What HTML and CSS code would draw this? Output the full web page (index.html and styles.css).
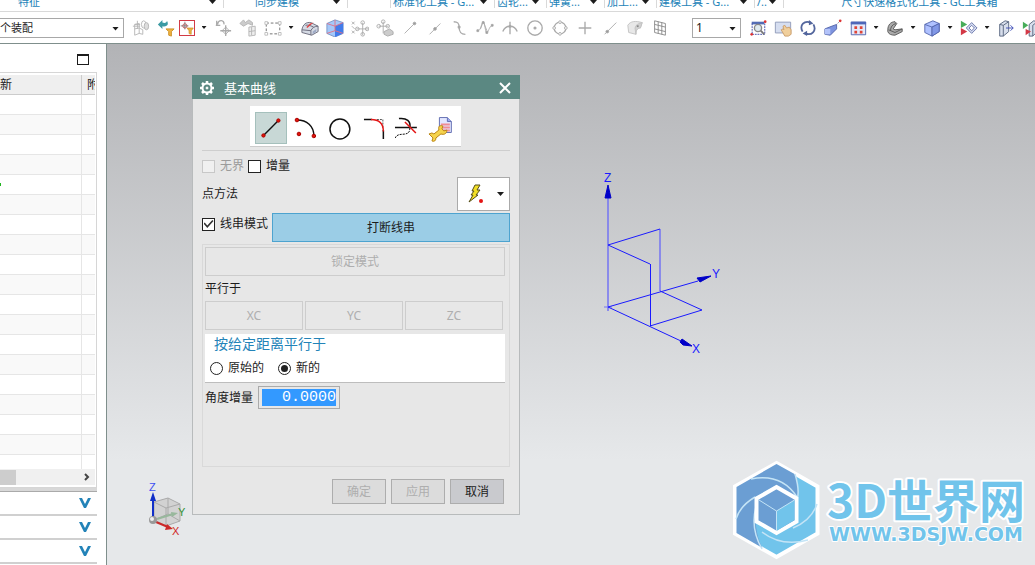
FILE: index.html
```html
<!DOCTYPE html>
<html lang="zh-CN">
<head>
<meta charset="utf-8">
<title>基本曲线</title>
<link rel="stylesheet" href="styles.css">
</head>
<body>
<div class="app">
  <nav class="groups">
    <div class="group g1"><span>特征</span><i class="caret"></i></div>
    <div class="group g2"><span>同步建模</span><i class="caret"></i></div>
    <div class="group gap"></div>
    <div class="group left g3"><span>标准化工具 - G...</span><i class="caret"></i></div>
    <div class="group left g4"><span>齿轮...</span><i class="caret"></i></div>
    <div class="group left g5"><span>弹簧...</span><i class="caret"></i></div>
    <div class="group left g6"><span>加工...</span><i class="caret"></i></div>
    <div class="group left g7"><span>建模工具 - G...</span><i class="caret"></i></div>
    <div class="group left g8"><span>/..</span><i class="caret"></i></div>
    <div class="group last"><span>尺寸快速格式化工具 - GC工具箱</span></div>
  </nav>

  <div class="toolbar">
    <div class="combo scope"><select aria-label="选择范围"><option>个装配</option></select></div>
    <button class="tool" aria-label="装配约束"><svg viewBox="0 0 20 20" fill="none" stroke="#b4b4b4"><path d="M3 6v12l5-2V5zM3 11l5-1M8 10l4 2v5l-4-1M1 8h8M6 2v9M3 6h6"/><ellipse cx="13" cy="6" rx="2.500" ry="4"/><ellipse cx="16" cy="8" rx="2.500" ry="4" fill="#ddd"/></svg></button>
    <button class="tool" aria-label="重置过滤器"><svg viewBox="0 0 20 20"><path d="M1 6l5-5v3c3 1 5 0 5-2 3 5-1 7-5 6v3z" fill="#3b9aa3"/><path d="M10 11h9l-3 3v5l-3-1v-4z" fill="#f0b440" stroke="#c98d25"/></svg></button>
    <button class="tool framed" aria-label="点过滤器"><svg viewBox="0 0 20 20"><path d="M7 1v11M1 7h11" stroke="#555"/><circle cx="7" cy="7" r="3" fill="none" stroke="#a33"/><path d="M10 10h9l-3 4v5l-3-1v-4z" fill="#f0b440" stroke="#c98d25"/></svg></button>
    <button class="drop" aria-label="更多过滤器"><i class="caret"></i></button>
    <button class="tool" aria-label="恢复点"><svg viewBox="0 0 20 20" fill="none" stroke="#aaa" stroke-width="1.500"><path d="M3 7V2M2 7h5M4 6c1-6 8-5 7 0M13 7v12M7 13h12"/><path d="M13 9l4 4-4 4-4-4z" stroke-width="1"/></svg></button>
    <button class="tool" aria-label="恢复选择"><svg viewBox="0 0 20 20" fill="#ccc" stroke="#b4b4b4"><path d="M1 5l4-4 2 3 4-3 4 3v3l-5-2-5 3z"/><path d="M11 9l7-1v10l-7 1zM11 14l7-1M14 9v9"  fill="#eee"/></svg></button>
    <button class="tool" aria-label="矩形选择"><svg viewBox="0 0 20 20" fill="none" stroke="#666"><path d="M2.500 4.500h15v12h-15z" stroke-dasharray="3 2"/><path d="M1 3h3v3H1zM16 15h3v3h-3zM16 3h3v3h-3zM1 15h3v3H1z" fill="#fff" stroke="#bbb"/></svg></button>
    <button class="drop" aria-label="选择方式"><i class="caret"></i></button>
    <button class="tool" aria-label="着色体"><svg viewBox="0 0 20 20"><path d="M1 12c1-6 5-9 10-8l8 4v6l-7 4-11-3z" fill="#d5dae4" stroke="#667"/><path d="M1 12l10 1c1-3 4-5 8-5M11 13v5M5 7c3-1 7 1 9 2" fill="none" stroke="#667"/><path d="M10 5l4-1-7 6-1-1z" fill="#d44"/><path d="M13 14l4-3v3l-4 3z" fill="#9da9c5"/></svg></button>
    <button class="tool" aria-label="静态线框"><svg viewBox="0 0 20 20"><path d="M1 5l9-4 9 3v12l-9 4-9-4z" fill="#a4c8fa" stroke="#7794c5"/><path d="M10 8v12l9-4V4z" fill="#427bea"/><path d="M1 5l9 3 9-4M10 1v12l-9 3M10 13l9 3" fill="none" stroke="#e16f83"/></svg></button>
    <button class="tool" aria-label="捕捉点"><svg viewBox="0 0 20 20" fill="none" stroke="#aaa"><path d="M1 3l3 3M1 8l3 3M1 13l3 3M4 3L1 6M4 13l-3 3M13 4v14M6 11h14"/><circle cx="13" cy="4" r="2"/><circle cx="13" cy="17" r="2"/><circle cx="7" cy="11" r="2"/><circle cx="18" cy="11" r="2"/></svg></button>
    <button class="tool" aria-label="清除捕捉"><svg viewBox="0 0 20 20" fill="none" stroke="#aaa"><circle cx="8" cy="3" r="2"/><circle cx="3" cy="8" r="2"/><circle cx="13" cy="8" r="2"/><path d="M8 3v13M3 8h11"/><path d="M9 14l6-3 4 3v3l-6 2-4-2z" fill="#ccc"/></svg></button>
    <button class="tool" aria-label="端点"><svg viewBox="0 0 20 20" stroke="#aaa" fill="#999"><path d="M4 16L15 5"/><circle cx="15" cy="5" r="1.500"/></svg></button>
    <button class="tool" aria-label="中点"><svg viewBox="0 0 20 20" stroke="#aaa" fill="#999"><path d="M4 17L16 5"/><circle cx="10" cy="11" r="1.500"/></svg></button>
    <button class="tool" aria-label="控制点"><svg viewBox="0 0 20 20" fill="none" stroke="#aaa" stroke-width="1.500"><path d="M3 3c5 0 6 2 6 6 0 6 2 8 7 8"/><circle cx="9" cy="9" r="1" fill="#999"/></svg></button>
    <button class="tool" aria-label="极点"><svg viewBox="0 0 20 20" fill="none" stroke="#aaa"><path d="M2 13C6 13 6 3 8 3s2 12 4 12 2-6 6-8M8 3l-3 8M8 3l5 12"/><path d="M1 12h2v2H1zM7 3h2v2H7zM11 14h2v2h-2zM17 6h2v2h-2z" fill="#999"/></svg></button>
    <button class="tool" aria-label="交点"><svg viewBox="0 0 20 20" fill="none" stroke="#aaa" stroke-width="1.500"><path d="M10 3v14M2 14C5 6 15 6 18 14"/><circle cx="10" cy="8" r="1" fill="#999"/></svg></button>
    <button class="tool" aria-label="圆心"><svg viewBox="0 0 20 20" fill="none" stroke="#aaa" stroke-width="1.500"><circle cx="10" cy="10" r="8"/><circle cx="10" cy="10" r="1" fill="#999"/></svg></button>
    <button class="tool" aria-label="象限点"><svg viewBox="0 0 20 20" fill="none" stroke="#aaa"><circle cx="10" cy="10" r="6.500" stroke-width="1.500"/><g fill="#fff"><circle cx="10" cy="3.500" r="1.500"/><circle cx="10" cy="16.500" r="1.500"/><circle cx="3.500" cy="10" r="1.500"/><circle cx="16.500" cy="10" r="1.500"/></g></svg></button>
    <button class="tool" aria-label="现有点"><svg viewBox="0 0 20 20" stroke="#aaa" stroke-width="1.500"><path d="M10 3v14M3 10h14"/></svg></button>
    <button class="tool" aria-label="曲线上的点"><svg viewBox="0 0 20 20" stroke="#aaa" fill="#999"><path d="M4 17L17 4"/><circle cx="7" cy="14" r="1.500"/></svg></button>
    <button class="tool" aria-label="面上的点"><svg viewBox="0 0 20 20" fill="#e8e8e8" stroke="#c2c2c2"><path d="M2 7c3-5 9-5 16-3l-2 6c-3 0-5 2-5 7l-8-2z"/><path d="M10 10c1-4 4-5 8-6l-2 6c-3 0-5 2-5 7z" fill="#d2d2d2"/><path d="M12 7h2v2h-2z" fill="#888" stroke="none"/></svg></button>
    <button class="tool" aria-label="有界栅格"><svg viewBox="0 0 20 20" fill="none" stroke="#888"><path d="M4 2l12 3v13L4 15zM4 6l12 3M4 11l12 3M8 3v13M12 4v13"/></svg></button>
    <span class="divider"></span>
    <div class="combo layer"><select aria-label="工作层"><option>1</option></select></div>
    <button class="tool" aria-label="适合窗口"><svg viewBox="0 0 20 20"><path d="M3 3h14v3H3z" fill="#536cb5"/><path d="M3.500 5v12h14V4" fill="none" stroke="#3543a3" stroke-dasharray="2 1"/><circle cx="10" cy="10" r="4" fill="#dfeaf0" stroke="#888" stroke-width="1.500"/><path d="M13 13l4 4" stroke="#777" stroke-width="2"/><circle cx="18" cy="3" r="1.500" fill="#d33"/><circle cx="3" cy="17" r="1.500" fill="#d33"/></svg></button>
    <button class="tool" aria-label="平移"><svg viewBox="0 0 20 20"><path d="M1.500 3.500h17v12h-17z" fill="#d6def0" stroke="#8d99b8"/><path d="M8 12l2-1 1 1-1-4 2-1 2 3 3-1 2 3v5l-3 2h-4z" fill="#f0cf9c" stroke="#c99b66"/></svg></button>
    <button class="tool" aria-label="旋转"><svg viewBox="0 0 20 20" fill="none" stroke="#53669d" stroke-width="2"><path d="M4 14C0 7 6 1 13 4M16 6c4 7-2 13-9 10"/><path d="M11 1l5 4-5 2zM9 13l-5 3 5 3z" fill="#53669d" stroke="none"/></svg></button>
    <button class="tool" aria-label="透视"><svg viewBox="0 0 20 20"><path d="M1 11l5-2 8-3v5l-7 7-6-1z" fill="#7d93df" stroke="#5263a7"/><path d="M1 11h6v6H1z" fill="#b3c3fa"/><path d="M15 5l2-2" stroke="#99a"/><circle cx="18" cy="2" r="1.500" fill="#d33"/></svg></button>
    <button class="tool" aria-label="定向视图"><svg viewBox="0 0 20 20"><path d="M2.500 3.500h16v14h-16z" fill="#e4e9fb" stroke="#4d5fa9"/><path d="M2 3h17v3H2z" fill="#4d66b9"/><path d="M6 8h3v3H6zM12 8h3v3h-3zM6 13h3v3H6zM12 13h3v3h-3z" fill="#e04436"/></svg></button>
    <button class="drop" aria-label="更多视图"><i class="caret"></i></button>
    <button class="tool" aria-label="截面"><svg viewBox="0 0 20 20" fill="#aaa" stroke="#555"><path d="M2 12c0-5 3-9 8-9l2 2-4 6 2 1 8-1v3l-8 4c-4 0-7-1-8-4z"/><path d="M3 12l7 3 8-4M11 5c-4 1-6 4-6 8" fill="none"/></svg></button>
    <button class="drop" aria-label="更多截面"><i class="caret"></i></button>
    <button class="tool" aria-label="渲染样式"><svg viewBox="0 0 20 20" stroke="#5265ad"><path d="M2 6l9-4 7 3v9l-8 5-8-4z" fill="#afc1ff"/><path d="M2 6l8 3 8-4M10 9v10" fill="none"/><path d="M10 9l8-4v9l-8 5z" fill="#8197e6"/></svg></button>
    <button class="drop" aria-label="更多样式"><i class="caret"></i></button>
    <button class="tool" aria-label="显示与隐藏"><svg viewBox="0 0 20 20"><path d="M1 2l7 4-7 4z" fill="#47ad59"/><path d="M1 10l7 4-7 4z" fill="#d33846"/><path d="M7 10l6-6 6 6-6 6z" fill="#d6dcf1" stroke="#6875a9"/><path d="M10 10l3-3 3 3-3 3z" fill="#fff" stroke="#6875a9"/></svg></button>
    <button class="drop" aria-label="更多显示"><i class="caret"></i></button>
    <button class="tool" aria-label="移动面"><svg viewBox="0 0 20 20" fill="#d8dfec" stroke="#53627c"><path d="M3 6l6-4 4 1v11l-6 5H3zM7 7v12M7 7l6-4M3 6l4 1"/><path d="M10 10h8M15 7l3 3-3 3" fill="none" stroke="#3947b4"/></svg></button>
    <button class="tool" aria-label="替换面"><svg viewBox="0 0 20 20" fill="#d8dfec" stroke="#53627c"><path d="M8 6l5-4 4 1v11l-5 5H8zM12 7v12M12 7l5-4"/><path d="M1 3l6 4-6 4z" fill="#47ad59" stroke="none"/><path d="M4 11l6 3-6 4z" fill="#d33846" stroke="none"/></svg></button>
  </div>

  <main class="work">
    <aside class="navigator">
      <div class="panel-top"><button class="maximize" aria-label="最大化"></button></div>
      <div class="tree">
        <table>
          <thead><tr><th>新</th><th>附</th></tr></thead>
          <tbody>
            <tr><td></td><td></td></tr><tr><td></td><td></td></tr><tr><td></td><td></td></tr><tr><td></td><td></td></tr>
            <tr><td><i class="mark"></i></td><td></td></tr>
            <tr><td></td><td></td></tr><tr><td></td><td></td></tr><tr><td></td><td></td></tr><tr><td></td><td></td></tr>
            <tr><td></td><td></td></tr><tr><td></td><td></td></tr><tr><td></td><td></td></tr><tr><td></td><td></td></tr>
            <tr><td></td><td></td></tr><tr><td></td><td></td></tr><tr><td></td><td></td></tr><tr><td></td><td></td></tr>
            <tr><td></td><td></td></tr><tr><td></td><td></td></tr>
          </tbody>
        </table>
        <div class="scrollbar"><span class="thumb"></span><button aria-label="向右滚动"><svg viewBox="0 0 8 8" fill="none" stroke="#444" stroke-width="2"><path d="M2 1l3 3-3 3"/></svg></button></div>
      </div>
      <div class="splitter"></div>
      <button class="section" aria-label="展开相依性"><svg viewBox="0 0 12 10"><path d="M0 0h3l3 6 3-6h3L7 10H5z" fill="#2383b8"/></svg></button>
      <button class="section" aria-label="展开细节"><svg viewBox="0 0 12 10"><path d="M0 0h3l3 6 3-6h3L7 10H5z" fill="#2383b8"/></svg></button>
      <button class="section" aria-label="展开预览"><svg viewBox="0 0 12 10"><path d="M0 0h3l3 6 3-6h3L7 10H5z" fill="#2383b8"/></svg></button>
    </aside>

    <section class="viewport">
      <svg class="csys" viewBox="590 170 145 190" fill="none" stroke="#1a1aff">
        <path d="M608 198v113M660 229v62" stroke="#7474f2" stroke-width="1.500"/>
        <path d="M604 307h8" stroke="#7474f2"/>
        <path d="M608 307l90-26M608 307l73 34M608 245l52-16M608 245l42 19M660 291l42 19-52 16"/>
        <path d="M650.500 264v62"/>
        <path d="M608 185l3 13h-6zM711 276l-11 6-3-4zM692 346l-9-1-3-3 2-3z" fill="#0000c8" stroke="#0000c8"/>
        <text x="604" y="182">Z</text><text x="712" y="278">Y</text><text x="692" y="353">X</text>
      </svg>
      <svg class="triad" viewBox="140 475 50 65" fill="none">
        <path d="M154 502l14-4 12 6v17l-14 5-12-6z" fill="#d2d2d2" stroke="#aaa"/>
        <path d="M154 502l12 6 14-4M166 508v18M168 498v16l12 7M154 520l14-6" stroke="#aaa"/>
        <path d="M157 519l16-5" stroke="#98b89c" stroke-width="2"/><path d="M171 512l7 1-6 4z" fill="#98b89c"/>
        <path d="M153 519v-19" stroke="#102fc8" stroke-width="2"/><path d="M153 492l3 9h-6z" fill="#102fc8"/>
        <path d="M156 522l12 5" stroke="#cc2929" stroke-width="2"/><path d="M167 524l6 5-8 1z" fill="#cc2929"/>
        <circle cx="153" cy="520" r="4" fill="#999"/><circle cx="152" cy="519" r="2" fill="#eee"/>
        <text x="149" y="491" fill="#3d50f2">Z</text><text x="178" y="516" fill="#349239">Y</text><text x="172" y="535" fill="#d12828">X</text>
      </svg>

      <svg class="watermark" viewBox="725 450 310 115">
        <path d="M776.500 463l41 23.500v47L776.500 557 735 533.500v-47z" fill="#71c4eb" stroke="#fff" stroke-width="4"/>
        <path d="M776.500 464l18 10c4 8 4 18 3 24l-21-13-21 12v25c1 8 2 17 7 26l-26-15v-46z" fill="#6b9ed3"/>
        <path d="M751 479c20-4 35 1 46 18M795 474c3 10 4 20 2 26M817 504c-4 12-12 19-24 24M808 540c-19 5-33 2-46-8M736 519c3-10 9-16 19-22M762 549c-9-16-10-31-5-45" fill="none" stroke="#c4e4f6" stroke-width="1.500"/>
        <path d="M776.500 487l20 11.500v23l-20 11.500-20-11.500v-23z" fill="#6b9ed3" stroke="#fff" stroke-width="4"/>
        <path d="M776.500 511l18-11v20l-18 11z" fill="#71c4eb"/>
        <path d="M759 500l17.500 11 18-11M776.500 511v20" fill="none" stroke="#c4e4f6"/>
        <text class="brand" x="827" y="518">3D世界网</text>
        <text class="url" x="829" y="541">WWW.3DSJW.COM</text>
      </svg>

      <form class="dialog">
        <header class="titlebar">
          <svg class="gear" viewBox="0 0 16 16" fill="none" stroke="#fff"><circle cx="8" cy="8" r="4.500" stroke-width="2"/><circle cx="8" cy="8" r="1" fill="#fff"/><path d="M8 1v2M8 13v2M1 8h2M13 8h2M3 3l2 2M11 11l2 2M13 3l-2 2M5 11l-2 2" stroke-width="2.500"/></svg>
          <h1>基本曲线</h1>
          <button type="button" class="close" aria-label="关闭"><svg viewBox="0 0 12 12" stroke="#fff" stroke-width="2"><path d="M1 1l10 10M11 1L1 11"/></svg></button>
        </header>
        <div class="content">
          <div class="curve-tools">
            <button type="button" class="curve active" aria-label="直线"><svg viewBox="0 0 32 32"><path d="M8 24L24 8" stroke="#111" stroke-width="1.500"/><g fill="#e01408" stroke="#a00"><circle cx="8" cy="24" r="1.800"/><circle cx="24" cy="8" r="1.800"/></g></svg></button>
            <button type="button" class="curve" aria-label="圆弧"><svg viewBox="0 0 32 32"><path d="M8 8c10 0 17 6 17 16" fill="none" stroke="#111" stroke-width="1.500"/><g fill="#e01408" stroke="#a00"><circle cx="8" cy="8" r="1.800"/><circle cx="25" cy="24" r="1.800"/><circle cx="10" cy="22" r="1.800"/></g></svg></button>
            <button type="button" class="curve" aria-label="圆"><svg viewBox="0 0 32 32"><circle cx="17" cy="17" r="10" fill="none" stroke="#111" stroke-width="1.500"/></svg></button>
            <button type="button" class="curve" aria-label="圆角"><svg viewBox="0 0 32 32" fill="none" stroke-width="1.500"><path d="M20 7.500h6v8" stroke="#555" stroke-width="1" stroke-dasharray="2 1"/><path d="M7 7.500h8M26.500 18v9" stroke="#111"/><path d="M14 7.500c8 0 12.500 4 12.500 12" stroke="#e31414"/></svg></button>
            <button type="button" class="curve" aria-label="修剪"><svg viewBox="0 0 32 32" fill="none" stroke="#111" stroke-width="1.500"><path d="M5 15.500h22M9 6.500c8-1 12 3 11 9"/><path d="M20 16c0 11-13 2-15 11" stroke-width="1" stroke-dasharray="2 1"/><path d="M15 10l11 11" stroke="#e31414"/></svg></button>
            <button type="button" class="curve" aria-label="编辑曲线参数"><svg viewBox="0 0 32 32"><path d="M15.500 5.500h8l4 4v11h-12z" fill="#e3e7ff" stroke="#6672b3"/><path d="M23.500 5.500v4h4" fill="#9caaf0" stroke="#6672b3"/><path d="M17 12.500h9M17 15.500h9M17 18.500h9" stroke="#f08c96" stroke-width="2"/><path d="M5 22l3-1 2 1 5-4c-1-4 1-5 4-4l-1 3 2 2 3-1c0 4-3 5-6 4l-5 4c0 3-2 4-4 3l1-3-2-2z" fill="#f5d34c" stroke="#b98414"/></svg></button>
          </div>
          <hr>
          <div class="checks">
            <label class="off"><input type="checkbox" disabled>无界</label>
            <label><input type="checkbox">增量</label>
          </div>
          <div class="method"><span>点方法</span>
            <button type="button" class="point" aria-label="点方法"><svg viewBox="0 0 20 20"><path d="M9 1h5l-3 5h3l-4 5h2l-9 7 4-7H5l3-4H6z" fill="#f2df25" stroke="#554e1b"/><circle cx="15" cy="17" r="2" fill="#e31414"/></svg><i class="caret"></i></button>
          </div>
          <div class="string"><label><input type="checkbox" checked>线串模式</label><button type="button" class="break">打断线串</button></div>
          <fieldset class="options">
            <button type="button" class="pale" disabled>锁定模式</button>
            <p>平行于</p>
            <div class="axes"><button type="button" class="pale" disabled>XC</button><button type="button" class="pale" disabled>YC</button><button type="button" class="pale" disabled>ZC</button></div>
            <div class="distance"><h2>按给定距离平行于</h2>
              <div class="radios"><label><input type="radio" name="source">原始的</label><label><input type="radio" name="source" checked>新的</label></div>
            </div>
            <div class="angle"><label for="angle">角度增量</label><input id="angle" type="text" value="0.0000"></div>
          </fieldset>
          <footer><button type="button" disabled>确定</button><button type="button" disabled>应用</button><button type="button" class="cancel">取消</button></footer>
        </div>
      </form>
    </section>
  </main>
</div>
</body>
</html>
```
FILE: styles.css
```css
* { box-sizing: border-box; }
body { margin: 0; background: #fff; color: #1c1c1c; font: 12px/16px "Noto Sans", "Noto Sans CJK SC", sans-serif; }
button, select, input { font: inherit; color: inherit; margin: 0; border-radius: 0; }
button { padding: 0; border: 0; background: none; }
.app { height: 100vh; display: flex; flex-direction: column; overflow: hidden; }
.caret { display: block; flex: none; width: 7px; height: 4px; background: #1c1c1c; clip-path: polygon(0 0, 100% 0, 50% 100%); }

/* ribbon group captions */
.groups { flex: none; display: flex; height: 12px; border-bottom: 1px solid #d9d9d9; overflow: hidden; color: #2383b8; font-size: 11px; }
.group { flex: none; display: flex; align-items: flex-end; height: 8px; border-right: 1px solid #d9d9d9; }
.group span { flex: 1; text-align: center; white-space: nowrap; line-height: 12px; }
.group .caret { margin: 0 7px 4px 0; }
.left span { text-align: left; padding-left: 2px; }
.g1 { width: 224px; }
.g1 span { text-align: left; padding-left: 18px; }
.g2 { width: 124px; }
.g2 span { text-align: left; padding-left: 31px; }
.gap { width: 43px; }
.g3 { width: 104px; }
.g4 { width: 52px; }
.g5 { width: 58px; }
.g6 { width: 52px; }
.g7 { width: 98px; }
.g8 { width: 29px; }
.last { flex: 1; border: 0; }
.last span { padding-left: 20px; }

.toolbar { flex: none; display: flex; align-items: center; height: 32px; border-bottom: 1px solid #7f8f8c; }
.tool { flex: none; display: grid; place-items: center; width: 25px; height: 24px; }
.tool svg { width: 18px; height: 18px; }
.framed { width: 16px; height: 16px; margin: 0 3px 0 1px; border: 1px solid #d23b46; }
.framed svg { width: 14px; height: 14px; }
.drop { flex: none; display: grid; place-items: center; width: 12px; height: 24px; }
.drop .caret { width: 5px; height: 3px; }
.combo { flex: none; position: relative; height: 20px; }
.combo::after { content: ""; position: absolute; right: 5px; top: 9px; width: 7px; height: 4px; background: #1c1c1c; clip-path: polygon(0 0, 100% 0, 50% 100%); }
.combo select { display: block; appearance: none; width: 100%; height: 100%; padding: 0; border: 1px solid #a8a8a8; background: #fff; }
.scope { width: 124px; margin-right: 4px; }
.scope select { border-left: 0; font-size: 11px; }
.divider { width: 1px; height: 24px; margin: 0 14px 0 6px; background: #d0d0d0; }
.layer { width: 49px; margin-right: 4px; }
.layer select { padding-left: 3px; }

.work { flex: 1; min-height: 0; display: flex; }
.navigator { flex: none; width: 107px; padding-right: 9px; border-right: 1px solid #7f8f8c; }
.panel-top { display: flex; justify-content: flex-end; height: 28px; padding: 10px 8px 0 0; }
.maximize { width: 12px; height: 11px; border: 1px solid #1c1c1c; border-top-width: 2px; }
.tree { border: 1px solid #d6d6d6; border-left: 0; padding: 2px 1px 2px 0; }
table { width: 100%; table-layout: fixed; border-collapse: separate; border-spacing: 0; }
th, td { height: 20px; padding: 0; border-bottom: 1px solid #e6e6e6; border-right: 1px solid #e6e6e6; overflow: hidden; white-space: nowrap; }
th { background: #efefef; border-color: #ccc; font-weight: 400; text-align: left; }
th:last-child { width: 13px; padding-left: 5px; border-right: 0; text-overflow: clip; }
td:last-child { border-right: 0; }
tbody tr:nth-child(even) { background: #f9f9f9; }
tbody tr:last-child td { height: 14px; border-bottom: 0; }
.mark { display: block; width: 1px; height: 3px; background: #21b421; }
.scrollbar { display: flex; justify-content: space-between; align-items: center; height: 16px; background: #f0f0f0; }
.thumb { width: 16px; height: 15px; background: #cdcdcd; }
.scrollbar button { width: 16px; height: 16px; display: grid; place-items: center; }
.scrollbar svg { width: 8px; height: 8px; }
.splitter { height: 4px; background: #d8d8d8; border-bottom: 1px solid #aaa; }
.section { width: 100%; height: 24px; display: flex; justify-content: flex-end; align-items: center; padding-right: 6px; border-bottom: 2px solid #d0d0d0; }
.section svg { width: 12px; height: 10px; }

.viewport { flex: 1; position: relative; overflow: hidden; background: linear-gradient(#b2b3b6, #e6e8ea 80%); }
.viewport > svg { position: absolute; }
.csys { left: 483px; top: 126px; width: 145px; height: 190px; }
.csys text { font: 12px "Liberation Sans", sans-serif; fill: #1a1aff; stroke: none; }
.triad { left: 33px; bottom: 25px; width: 50px; height: 65px; }
.triad text { font: 11px "Liberation Sans", sans-serif; }
.watermark { right: 0; bottom: 0; width: 310px; height: 115px; }
.watermark text { fill: #71c4eb; stroke: #fff; stroke-width: 4px; paint-order: stroke; stroke-linejoin: round; }
.brand { font: 700 46px "Noto Sans CJK SC", sans-serif; }
.watermark .url { font: 19px "DejaVu Sans", sans-serif; font-weight: 700; stroke-width: 2px; }

.dialog { position: absolute; left: 85px; top: 31px; width: 328px; background: #e7e7e7; border: 1px solid #b8bbbc; border-top: 0; }
.titlebar { display: flex; align-items: center; gap: 9px; height: 24px; margin: 0 -1px; padding: 1px 9px 0 7px; background: #5b8882; color: #fff; }
.gear { width: 16px; height: 16px; }
.titlebar h1 { flex: 1; margin: 0; font-size: 13px; font-weight: 400; }
.close svg { display: block; width: 12px; height: 12px; }
.content { padding: 7px 9px 10px; }
.curve-tools { display: flex; gap: 2px; width: 211px; height: 41px; margin: 0 48px; padding: 6px 5px 2px; background: #fff; border-bottom: 1px solid #ccc; }
.curve { width: 32px; height: 32px; }
.active { background: #c8d8d6; border: 1px solid #a5c0bc; }
.curve svg { display: block; width: 100%; height: 100%; }
hr { margin: 3px 0 7px; border: 0; border-top: 1px solid #cecece; }
.content label { display: flex; align-items: center; gap: 5px; white-space: nowrap; }
input[type="checkbox"], input[type="radio"] { appearance: none; flex: none; display: grid; place-items: center; width: 13px; height: 13px; border: 1px solid #222; background: #fff; }
input[type="checkbox"]:disabled { border-color: #c8c8c8; background: #f0f0f0; }
input[type="checkbox"]:checked::before { content: ""; width: 10px; height: 8px; background: #333; clip-path: polygon(0 45%, 12% 32%, 38% 68%, 88% 0, 100% 14%, 38% 100%); }
input[type="radio"] { border-radius: 50%; }
input[type="radio"]:checked::before { content: ""; width: 7px; height: 7px; border-radius: 50%; background: #222; }
.checks { display: flex; gap: 4px; height: 16px; }
.off { color: #9b9b9b; }
.method { display: flex; justify-content: space-between; align-items: center; margin-top: 3px; }
.point { display: flex; align-items: center; justify-content: space-between; width: 53px; height: 34px; padding: 0 5px 0 8px; background: #fff; border: 1px solid #aaa; }
.point svg { width: 20px; height: 20px; }
.string { display: flex; gap: 4px; align-items: flex-start; margin-top: 2px; }
.string label { padding-top: 3px; }
.break { flex: 1; height: 29px; background: #9bcde6; border: 1px solid #4da3cf; }
.options { margin: 2px 0 0; min-height: 223px; padding: 2px 4px 0 2px; border: 1px solid #d9d9d9; }
.pale { display: block; width: 100%; height: 29px; border: 1px solid #cdcdcd; color: #aeaeae; }
.options p { margin: 5px 0 4px; }
.axes { display: grid; grid-template-columns: repeat(3, 1fr); gap: 2px; padding-right: 2px; }
.distance { height: 49px; margin: 4px 0 3px; padding: 2px 5px 0; background: #fff; border-bottom: 1px solid #bdbdbd; }
.distance h2 { margin: 0 0 8px; padding-left: 4px; color: #2383b8; font-size: 14px; line-height: 16px; font-weight: 400; }
.radios { display: flex; gap: 14px; }
.angle { display: flex; align-items: center; gap: 5px; }
.angle input { width: 82px; height: 23px; padding: 2px 3px; border: 1px solid #aaa; background: #fff linear-gradient(#3399ff, #3399ff) content-box no-repeat; color: #fff; font: 15px/17px "Liberation Mono", monospace; text-align: right; }
.content footer { display: flex; justify-content: flex-end; gap: 5px; margin-top: 12px; padding-right: 6px; }
footer button { width: 54px; height: 25px; border: 1px solid #adadad; background: #dcdcdc; color: #aeaeae; }
footer .cancel { background: #c9cace; color: #1c1c1c; }
```
